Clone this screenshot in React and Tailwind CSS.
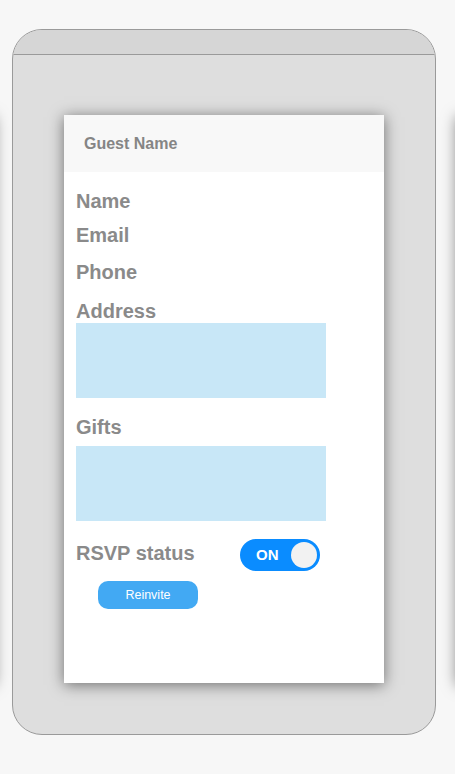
import React from "react";

// Label shown in the guest details form
function FieldLabel({ children, className = "" }) {
  return (
    <div className={"text-[20px] leading-6 font-bold text-[#8a8a8a] " + className}>
      {children}
    </div>
  );
}

function Toggle() {
  return (
    <div className="flex items-center justify-between w-20 h-8 rounded-full bg-[#0a8cff] pl-4 pr-[3px]">
      <span className="text-[15px] font-bold text-white">ON</span>
      <span className="w-[26px] h-[26px] rounded-full bg-[#f2f2f2]" />
    </div>
  );
}

export default function App() {
  return (
    <div
      className="relative w-[455px] h-[774px] overflow-hidden bg-[#f7f7f7]"
      style={{ fontFamily: '"Liberation Sans", Arial, sans-serif' }}
    >
      {/* neighbouring screens, only their shadows peek in */}
      <div className="absolute left-[-326px] top-[115px] w-[320px] h-[568px] bg-white shadow-[0_2px_14px_rgba(0,0,0,0.5)]" />
      <div className="absolute left-[457px] top-[115px] w-[320px] h-[568px] bg-white shadow-[0_2px_14px_rgba(0,0,0,0.5)]" />

      <div className="absolute left-[12px] top-[29px] w-[424px] h-[706px] rounded-[30px] border border-[#9a9a9a] bg-[#dedede] overflow-hidden flex flex-col">
        <div className="h-[25px] shrink-0 bg-[#d6d6d6] border-b border-[#9a9a9a]" />

        <div className="flex justify-center pt-[60px]">
          <div className="w-[320px] h-[568px] bg-white shadow-[0_2px_14px_rgba(0,0,0,0.5)] flex flex-col">
            <div className="h-[57px] bg-[#f8f8f8] flex items-center px-5">
              <span className="text-[16px] font-bold text-[#858585]">Guest Name</span>
            </div>

            <div className="px-3 pt-[17px] flex flex-col">
              <FieldLabel>Name</FieldLabel>
              <FieldLabel className="mt-[10px]">Email</FieldLabel>
              <FieldLabel className="mt-[13px]">Phone</FieldLabel>
              <FieldLabel className="mt-[15px]">Address</FieldLabel>
              <div className="w-[250px] h-[75px] bg-[#c8e7f7]" />

              <FieldLabel className="mt-[17px]">Gifts</FieldLabel>
              <div className="mt-[7px] w-[250px] h-[75px] bg-[#c8e7f7]" />

              <div className="mt-[18px] flex items-center">
                <FieldLabel className="w-[164px] pb-1">RSVP status</FieldLabel>
                <Toggle />
              </div>

              <button className="mt-[10px] ml-[22px] w-[100px] h-7 rounded-[10px] bg-[#42a9f3] text-white text-[12.5px]">
                Reinvite
              </button>
            </div>
          </div>
        </div>
      </div>
    </div>
  );
}
